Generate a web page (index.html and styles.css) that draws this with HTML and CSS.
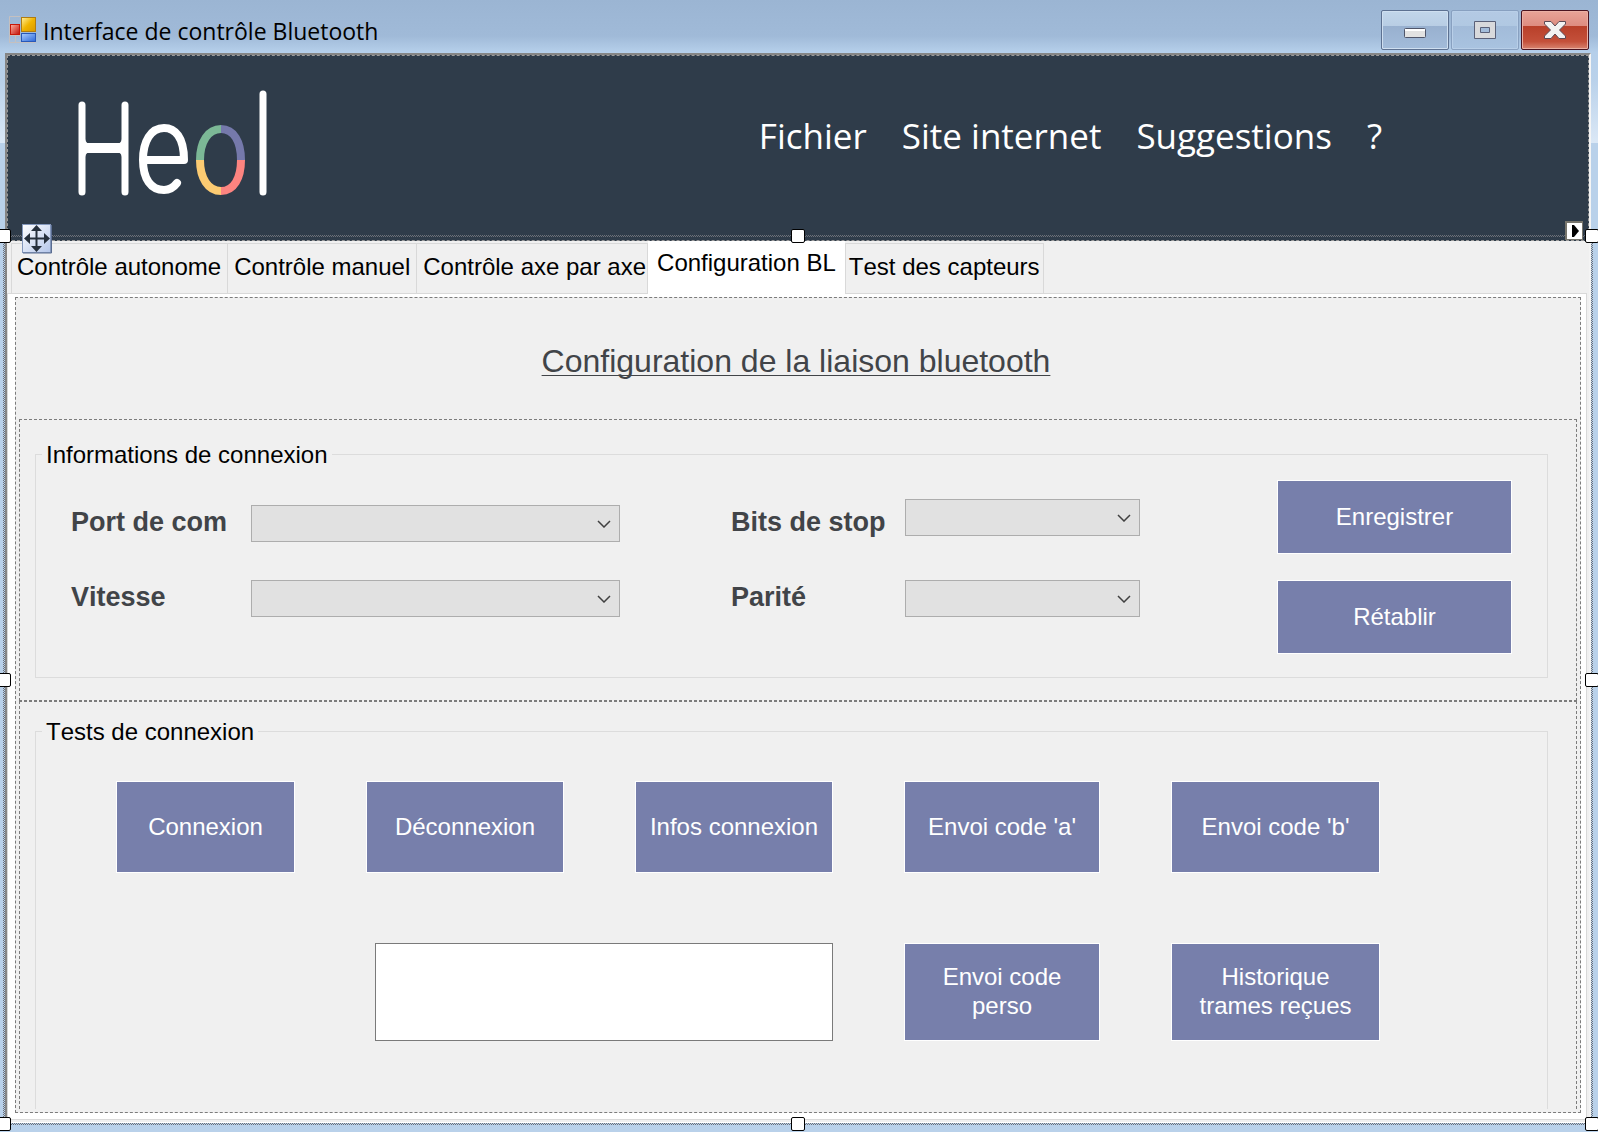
FILE: index.html
```html
<!DOCTYPE html>
<html lang="fr">
<head>
<meta charset="utf-8">
<title>Interface de contrôle Bluetooth</title>
<link rel="stylesheet" href="styles.css">
</head>
<body>
<div class="window">
  <header class="titlebar">
    <svg class="app-icon" width="28" height="28" viewBox="0 0 28 28" aria-hidden="true">
      <defs>
        <linearGradient id="gold" x1="0" y1="0" x2="1" y2="1"><stop offset="0" stop-color="#fff0a0"/><stop offset=".5" stop-color="#f0b400"/><stop offset="1" stop-color="#d89800"/></linearGradient>
        <linearGradient id="red" x1="0" y1="0" x2="1" y2="1"><stop offset="0" stop-color="#ffb0a0"/><stop offset="1" stop-color="#c01008"/></linearGradient>
        <linearGradient id="blue" x1="0" y1="0" x2="1" y2="1"><stop offset="0" stop-color="#a8ccff"/><stop offset="1" stop-color="#2c68d8"/></linearGradient>
      </defs>
      <path d="M.5 27V.5H11M.5 19.500H11M6.500 19V27M.5 26.500H27" fill="none" stroke="#c4c0c0"/>
      <rect x="12.500" y="1.500" width="14" height="14" fill="url(#gold)" stroke="#b07c10"/>
      <rect x="1.500" y="8.500" width="9" height="10" fill="url(#red)" stroke="#c81808"/>
      <rect x="12.500" y="17.500" width="14" height="8" fill="url(#blue)" stroke="#2858b8"/>
    </svg>
    <h1 class="title">Interface de contrôle Bluetooth</h1>
    <div class="controls">
      <button class="control" aria-label="Réduire"><svg width="22" height="22" viewBox="0 0 22 22"><rect x=".5" y="9.500" width="21" height="9" rx="1" fill="#e2e2e2" stroke="#50566a"/><path d="M1 11H21" stroke="#fff" stroke-width="2"/></svg></button>
      <button class="control control-max" aria-label="Agrandir"><svg width="22" height="22" viewBox="0 0 22 22"><path fill-rule="evenodd" d="M.5 2.500H21.500V19.500H.5ZM6.500 8.500V13.500H15.500V8.500Z" fill="#d8d9dc" stroke="#5a6078"/></svg></button>
      <button class="control control-close" aria-label="Fermer"><svg width="24" height="22" viewBox="0 0 24 22"><path d="M1.500 2.500H8L12 7L16 2.500H22.500V5L16.500 11L22.500 17V19.500H16L12 15L8 19.500H1.500V17L7.500 11L1.500 5Z" fill="#f2f2f2" stroke="#5c4a55"/></svg></button>
    </div>
  </header>

  <main class="frame">
    <div class="banner">
      <svg class="logo" width="192" height="110" viewBox="0 0 192 110" role="img" aria-label="Heol">
        <g fill="none" stroke="#fff" stroke-width="7" stroke-linecap="round">
          <path d="M4 16V103M47 16V103M185 5V103"/>
          <path d="M4 59H47" stroke-width="10" stroke-linecap="butt"/>
          <path d="M66 71H106C106 48 97 39 86 39C73 39 65 52 65 71C65 90 73 101 86 101C92 101 96 98 99 94" stroke-width="8" stroke-linejoin="round"/>
        </g>
        <path d="M7 50Q8 55 13 55H38Q43 55 44 50V68Q43 63 38 63H13Q8 63 7 68Z" fill="#fff"/>
        <g fill="none" stroke-width="8">
          <path d="M143 40C130 40 122 53 122 71" stroke="#7cb896"/>
          <path d="M143 40C156 40 163 53 163 71" stroke="#7579ab"/>
          <path d="M122 71C122 89 130 102 143 102" stroke="#fccb72"/>
          <path d="M163 71C163 89 156 102 143 102" stroke="#fd8480"/>
        </g>
      </svg>
      <nav class="menu">
        <a href="#fichier">Fichier</a>
        <a href="#site">Site internet</a>
        <a href="#suggestions">Suggestions</a>
        <a href="#aide">?</a>
      </nav>
    </div>

    <div class="tab-control">
      <div class="tabs" role="tablist">
        <button class="tab" role="tab">Contrôle autonome</button>
        <button class="tab" role="tab">Contrôle manuel</button>
        <button class="tab" role="tab">Contrôle axe par axe</button>
        <button class="tab tab-selected" role="tab" aria-selected="true">Configuration BL</button>
        <button class="tab" role="tab">Test des capteurs</button>
      </div>
      <div class="tab-page" role="tabpanel">
        <div class="page-body">
          <h2 class="heading">Configuration de la liaison bluetooth</h2>
          <section class="panel">
            <fieldset class="group group-info">
              <legend>Informations de connexion</legend>
              <div class="info">
                <div class="fields">
                  <label for="port">Port de com</label>
                  <div class="combo"><select id="port"></select><svg width="14" height="8" viewBox="0 0 14 8"><path d="M1 1L7 7L13 1"/></svg></div>
                  <label class="second" for="stop">Bits de stop</label>
                  <div class="combo combo-top"><select id="stop"></select><svg width="14" height="8" viewBox="0 0 14 8"><path d="M1 1L7 7L13 1"/></svg></div>
                  <label for="vitesse">Vitesse</label>
                  <div class="combo"><select id="vitesse"></select><svg width="14" height="8" viewBox="0 0 14 8"><path d="M1 1L7 7L13 1"/></svg></div>
                  <label class="second" for="parite">Parité</label>
                  <div class="combo"><select id="parite"></select><svg width="14" height="8" viewBox="0 0 14 8"><path d="M1 1L7 7L13 1"/></svg></div>
                </div>
                <div class="actions">
                  <button class="btn">Enregistrer</button>
                  <button class="btn">Rétablir</button>
                </div>
              </div>
            </fieldset>
          </section>
          <section class="panel panel-tests">
            <fieldset class="group group-tests">
              <legend>Tests de connexion</legend>
              <div class="tests">
                <button class="btn">Connexion</button>
                <button class="btn">Déconnexion</button>
                <button class="btn">Infos connexion</button>
                <button class="btn">Envoi code 'a'</button>
                <button class="btn">Envoi code 'b'</button>
                <textarea class="code" aria-label="Code personnalisé"></textarea>
                <button class="btn">Envoi code perso</button>
                <button class="btn">Historique trames reçues</button>
              </div>
            </fieldset>
          </section>
        </div>
      </div>

      <div class="selection" aria-hidden="true">
        <i class="handle n w"></i><i class="handle n c"></i><i class="handle n e"></i>
        <i class="handle m w"></i><i class="handle m e"></i>
        <i class="handle s w"></i><i class="handle s c"></i><i class="handle s e"></i>
      </div>
      <svg class="mover" width="30" height="30" viewBox="0 0 30 30" aria-hidden="true">
        <defs><linearGradient id="mv" x1="0" y1="0" x2="1" y2="1"><stop offset="0" stop-color="#fff"/><stop offset="1" stop-color="#b4c6ea"/></linearGradient></defs>
        <rect x=".5" y=".5" width="28" height="28" fill="url(#mv)" stroke="#8498bc"/>
        <path d="M1 29H29.500V1" fill="none" stroke="#5a6c90"/>
        <path d="M5 14.500H24M14.500 5V24" stroke="#26303c" stroke-width="2"/>
        <path d="M14.500 1L20 7H9ZM14.500 28L20 22H9ZM2 14.500L8 9V20ZM28 14.500L22 9V20Z" fill="#26303c"/>
      </svg>
      <svg class="smart-tag" width="18" height="19" viewBox="0 0 18 19" aria-hidden="true">
        <rect x="1" y="1" width="17" height="18" fill="#fff" stroke="#77756c" stroke-width="2"/>
        <path d="M7 4H9L14 10L9 16H7Z" fill="#000"/>
      </svg>
    </div>
  </main>
</div>
</body>
</html>
```
FILE: styles.css
```css
* { box-sizing: border-box; }

body {
  margin: 0;
  overflow-x: hidden;
  font-family: "Liberation Sans", Arial, sans-serif;
  font-size: 24px;
  font-kerning: none;
  color: #000;
}

button, select, textarea { font: inherit; font-kerning: none; margin: 0; border-radius: 0; }

.window {
  display: flex;
  flex-direction: column;
  min-height: 100vh;
  padding: 0 7px 9px 5px;
  overflow: hidden;
  background:
    linear-gradient(#9bb5d3 0, #a0bad8 36px, #b5cfea 52px, #b9d1ea 80px, #dbe8f6 143px, #b9d1ea 143px);
}

/* Title bar */
.titlebar {
  display: flex;
  align-items: flex-start;
  height: 53px;
  padding: 10px 2px 0 4px;
}

.app-icon { margin-top: 6px; flex: none; }

.title {
  margin: 0 0 0 6px;
  font: 400 23px/42px "Open Sans", "Noto Sans", sans-serif;
}

.controls { display: flex; gap: 2px; margin-left: auto; }

.control {
  display: grid;
  place-items: center;
  width: 68px;
  height: 40px;
  padding: 0;
  border: 1px solid #5d7191;
  border-radius: 2px;
  background: linear-gradient(#c2d6ea 0, #b8cde4 40%, #98b0cf 40%, #a3bcda 100%);
  box-shadow: inset 0 0 0 1px #cfdff0;
}

.control-max {
  border-color: #88a0c0;
  background: linear-gradient(#b4cae4 0, #b0c8e2 40%, #a2bbd9 40%, #a9c3e0 100%);
  box-shadow: inset 0 0 0 1px #b9cfe8;
}

.control-close {
  border-color: #4a1420;
  background: linear-gradient(#e8a498 0, #dd8c80 40%, #b8402a 40%, #c4503a 80%, #d88470 100%);
  box-shadow: inset 0 0 0 1px #eab0a4;
}

/* Designed form */
.frame {
  display: flex;
  flex-direction: column;
  flex: 1;
  border: 2px solid #858585;
  border-right-color: #f4f4f4;
  border-bottom: 1px solid #fff;
  background: #f0f0f0;
}

.banner {
  display: flex;
  align-items: flex-start;
  height: 186px;
  padding: 33px 206px 0 70px;
  border: 1px dashed #9a9a9a;
  background: #2f3c4a;
}

.menu {
  display: flex;
  gap: 35px;
  margin-left: auto;
  padding-top: 19px;
  font: 400 35px/56px "Open Sans", "Noto Sans", sans-serif;
}

.menu a { color: #fff; text-decoration: none; }

.tab-control {
  position: relative;
  display: flex;
  flex-direction: column;
  flex: 1;
  padding: 0 2px 2px 0;
}

.tabs {
  display: flex;
  align-items: flex-end;
  height: 53px;
  margin-bottom: -1px;
  padding-left: 4px;
}

.tab {
  height: 51px;
  padding: 0 6px 4px 5px;
  border: 1px solid #d9d9d9;
  border-left-width: 0;
  background: #f0f0f0;
  color: #000;
  white-space: nowrap;
}

.tab:first-child { border-left-width: 1px; }
.tab:nth-child(2) { padding-left: 6px; }
.tab:nth-child(3) { padding: 0 1px 4px 6px; }
.tab:last-child { padding: 0 3px 4px; border-left-width: 1px; }

.tab-selected {
  position: relative;
  z-index: 1;
  height: 53px;
  padding: 0 9px 10px;
  border: 0;
  background: #fff;
}

.tab-page {
  display: flex;
  flex: 1;
  padding: 3px 5px 6px 7px;
  border: 1px solid #d9d9d9;
  background: #fff;
}

.page-body {
  display: flex;
  flex-direction: column;
  flex: 1;
  padding: 0 3px 3px;
  border: 1px dashed #7c7c7c;
  background: #f0f0f0;
}

.heading {
  margin: 0;
  padding: 43px 4px 0 0;
  height: 121px;
  font-size: 32px;
  font-weight: 400;
  line-height: 40px;
  text-align: center;
  color: #414448;
  text-decoration: underline;
  text-decoration-thickness: 1px;
  text-decoration-skip-ink: none;
  text-underline-offset: 3px;
}

.panel {
  padding: 21px 28px 22px 15px;
  border: 1px dashed #7c7c7c;
}

.panel-tests {
  display: flex;
  flex: 1;
  padding: 16px 28px 0 15px;
  border-bottom: 0;
}

.group {
  min-width: 0;
  margin: 0;
  padding: 0;
  border: 1px solid #dcdcdc;
}

.group legend {
  margin-left: 6px;
  padding: 0 4px;
  line-height: 27px;
}

.group-tests { flex: 1; border-bottom: 0; }

/* Connection settings */
.info {
  display: flex;
  align-items: flex-start;
  padding: 12px 35px 23px;
}

.fields {
  display: grid;
  flex: 1206;
  grid-template-columns: 180fr 369fr 111fr 174fr 235fr 137fr;
  grid-template-rows: 43px 37px;
  row-gap: 38px;
  align-items: end;
  padding-top: 19px;
}

.fields label {
  grid-column: 1;
  font-size: 27px;
  font-weight: 700;
  line-height: 31px;
  padding-bottom: 4px;
  color: #414448;
  white-space: nowrap;
}

.fields .second { grid-column: 4; }

.combo { position: relative; height: 37px; }
.combo-top { align-self: start; }

.combo select {
  display: block;
  width: 100%;
  height: 100%;
  border: 1px solid #adadad;
  background: #e1e1e1;
  appearance: none;
}

.combo svg {
  position: absolute;
  right: 9px;
  top: 15px;
  pointer-events: none;
  fill: none;
  stroke: #404040;
  stroke-width: 1.5;
}

.actions {
  display: flex;
  flex-direction: column;
  flex: 235;
  gap: 26px;
}

.btn {
  min-width: 0;
  padding: 0 10px 2px;
  border: 1px solid #fff;
  background: #777fab;
  color: #fff;
  line-height: 29px;
}

.actions .btn { height: 74px; }

/* Connection tests */
.tests {
  display: grid;
  grid-template-columns: 179fr 198fr 198fr 196fr 209fr;
  grid-template-rows: 92px 98px;
  gap: 70px 71px;
  padding: 36px 167px 67px 80px;
}

.code {
  grid-column: 2 / 4;
  display: block;
  height: 98px;
  margin-left: 9px;
  border: 1px solid #7a7a7a;
  background: #fff;
  resize: none;
}

/* Designer selection frame: a hatched band with eight grab handles */
.selection {
  position: absolute;
  z-index: 2;
  inset: -6px -4px -3px -4px;
  pointer-events: none;
}

.selection::before {
  content: "";
  position: absolute;
  inset: 0;
  background: repeating-conic-gradient(#6c7078 0 25%, transparent 0 50%) 0 0 / 2px 2px;
  clip-path: polygon(evenodd, 0 0, 100% 0, 100% 100%, 0 100%, 0 0, 2px 2px, calc(100% - 2px) 2px, calc(100% - 2px) calc(100% - 2px), 2px calc(100% - 2px), 2px 2px);
}

.handle {
  position: absolute;
  width: 14px;
  height: 14px;
  border: 1px solid #000;
  border-radius: 2px;
  background: #fff;
}

.n { top: -6px; }
.m { top: calc(50% - 7px); }
.s { bottom: -6px; }
.w { left: -6px; }
.c { left: calc(50% - 7px); }
.e { right: -6px; }

.mover { position: absolute; z-index: 3; left: 15px; top: -17px; }
.smart-tag { position: absolute; z-index: 3; right: 6px; top: -20px; }
```
